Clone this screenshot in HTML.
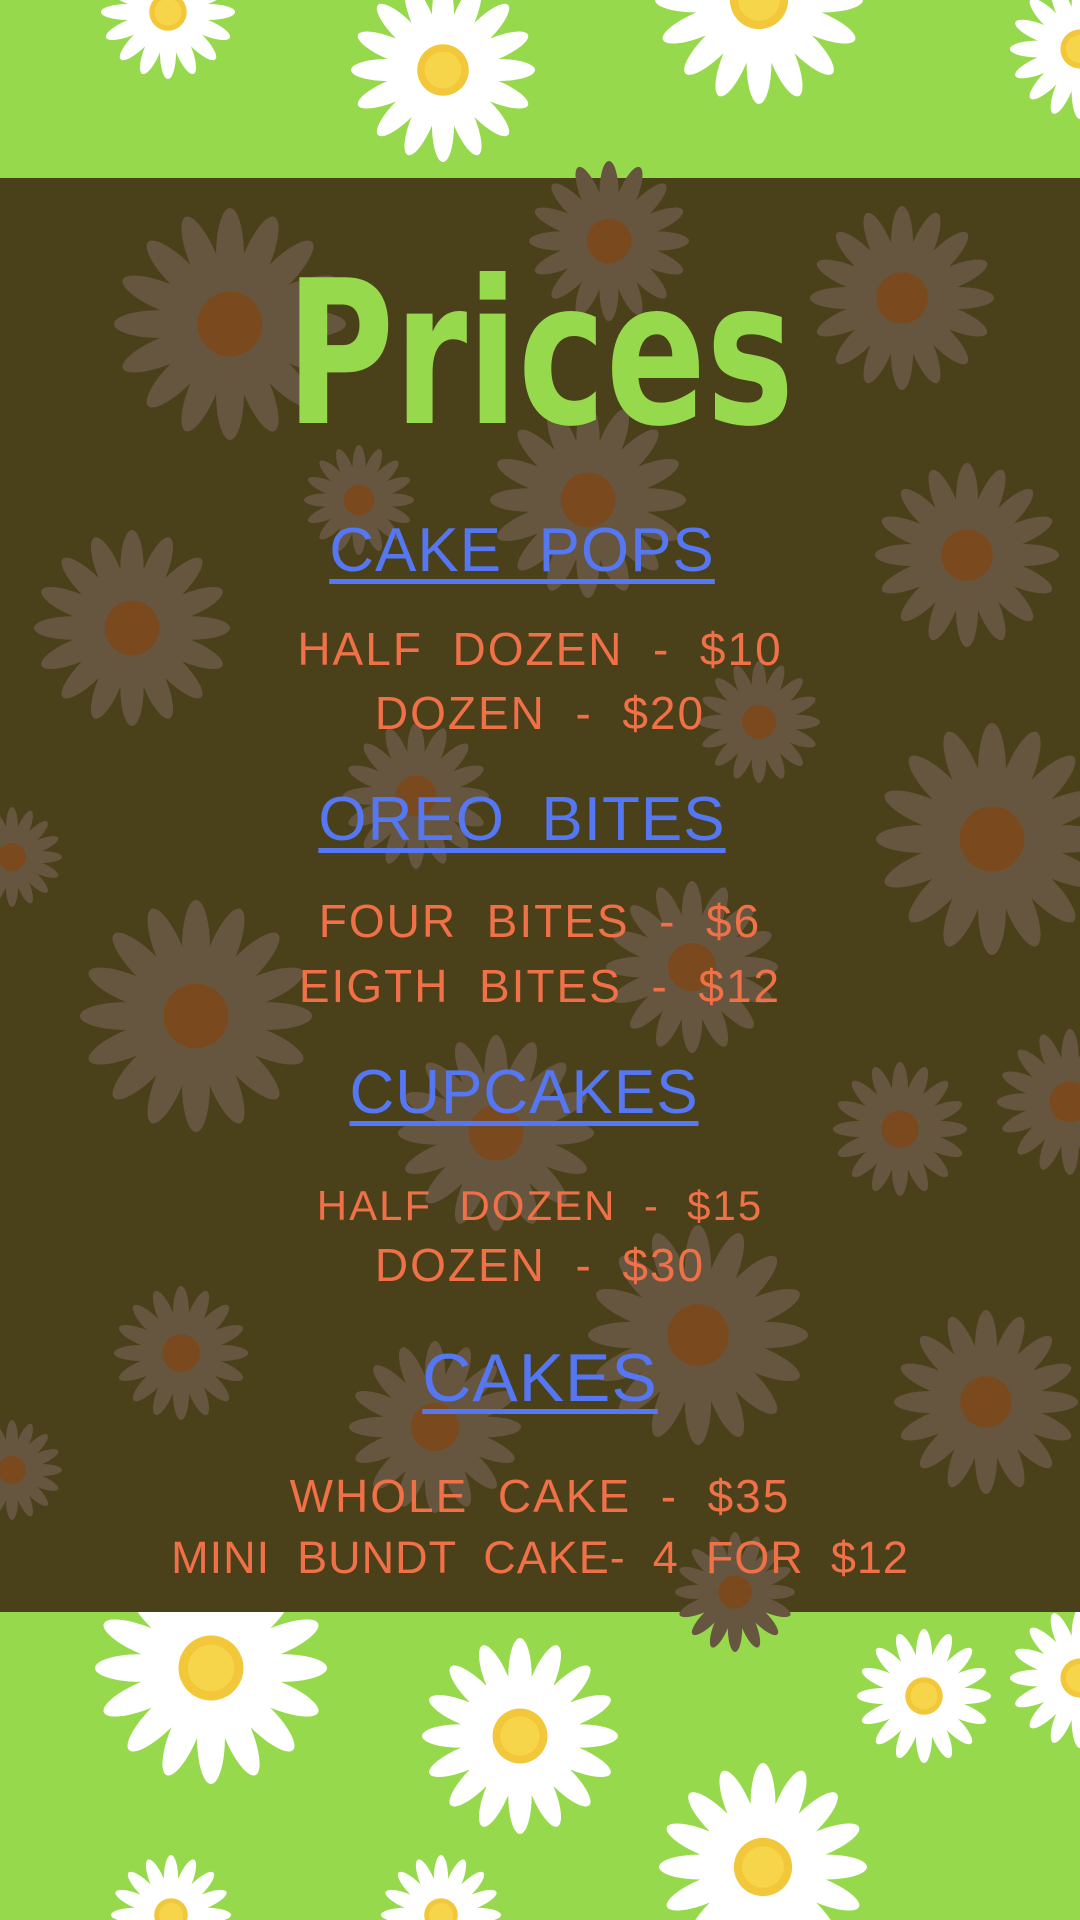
<!DOCTYPE html>
<html><head><meta charset="utf-8"><style>
html,body{margin:0;padding:0}
body{width:1080px;height:1920px;position:relative;overflow:hidden;background:#97d94c;font-family:"Liberation Sans",sans-serif}
svg{position:absolute;left:0;top:0}
.t{position:absolute;left:0;width:1080px;text-align:center;line-height:1;white-space:pre}
.h{color:#5577f2;font-size:62px;text-decoration:underline;text-decoration-thickness:5px;text-underline-offset:8px;letter-spacing:1px}
.i{color:#f07048;font-size:46px;letter-spacing:2px}
</style></head><body>
<svg width="1080" height="1920" viewBox="0 0 1080 1920">
<defs>
<g id="pw"><ellipse cx="0" cy="-0.6" rx="0.12" ry="0.4"/></g>
<g id="pet">
<use href="#pw"/><use href="#pw" transform="rotate(22.5)"/><use href="#pw" transform="rotate(45)"/><use href="#pw" transform="rotate(67.5)"/>
<use href="#pw" transform="rotate(90)"/><use href="#pw" transform="rotate(112.5)"/><use href="#pw" transform="rotate(135)"/><use href="#pw" transform="rotate(157.5)"/>
<use href="#pw" transform="rotate(180)"/><use href="#pw" transform="rotate(202.5)"/><use href="#pw" transform="rotate(225)"/><use href="#pw" transform="rotate(247.5)"/>
<use href="#pw" transform="rotate(270)"/><use href="#pw" transform="rotate(292.5)"/><use href="#pw" transform="rotate(315)"/><use href="#pw" transform="rotate(337.5)"/>
</g>
<g id="wd"><g fill="#ffffff"><use href="#pet"/></g><circle r="0.28" fill="#f2c83a"/><circle r="0.2" fill="#f6d54a"/></g>
<g id="dd"><g fill="#67563f"><use href="#pet"/></g><circle r="0.28" fill="#7a4a1e"/></g>
</defs>
<g>
<use href="#wd" transform="translate(168,12) scale(67)"/>
<use href="#wd" transform="translate(443,70) scale(92)"/>
<use href="#wd" transform="translate(759,0) scale(104)"/>
<use href="#wd" transform="translate(1080,49) scale(70)"/>
<use href="#wd" transform="translate(211,1668) scale(116)"/>
<use href="#wd" transform="translate(520,1736) scale(98)"/>
<use href="#wd" transform="translate(924,1696) scale(67)"/>
<use href="#wd" transform="translate(763,1867) scale(104)"/>
<use href="#wd" transform="translate(171,1915) scale(60)"/>
<use href="#wd" transform="translate(441,1915) scale(60)"/>
<use href="#wd" transform="translate(1080,1678) scale(70)"/>
</g>
<rect x="0" y="178" width="1080" height="1434" fill="#4a401a"/>
<g>
<use href="#dd" transform="translate(230,324) scale(116)"/>
<use href="#dd" transform="translate(609,241) scale(80)"/>
<use href="#dd" transform="translate(902,298) scale(92)"/>
<use href="#dd" transform="translate(588,500) scale(98)"/>
<use href="#dd" transform="translate(359,500) scale(55)"/>
<use href="#dd" transform="translate(967,555) scale(92)"/>
<use href="#dd" transform="translate(132,628) scale(98)"/>
<use href="#dd" transform="translate(759,722) scale(61)"/>
<use href="#dd" transform="translate(992,839) scale(116)"/>
<use href="#dd" transform="translate(196,1016) scale(116)"/>
<use href="#dd" transform="translate(416,796) scale(73)"/>
<use href="#dd" transform="translate(692,967) scale(86)"/>
<use href="#dd" transform="translate(900,1129) scale(67)"/>
<use href="#dd" transform="translate(496,1133) scale(98)"/>
<use href="#dd" transform="translate(1070,1102) scale(73)"/>
<use href="#dd" transform="translate(698,1335) scale(110)"/>
<use href="#dd" transform="translate(181,1353) scale(67)"/>
<use href="#dd" transform="translate(986,1402) scale(92)"/>
<use href="#dd" transform="translate(435,1427) scale(86)"/>
<use href="#dd" transform="translate(12,857) scale(50)"/>
<use href="#dd" transform="translate(12,1470) scale(50)"/>
<use href="#dd" transform="translate(735,1592) scale(60)"/>
</g>
</svg>
<div class="t" style="top:255px;font-family:'DejaVu Sans',sans-serif;font-weight:bold;font-size:200px;color:#97d94c;transform:scaleX(0.74)">Prices</div>
<div class="t h" style="top:520px;left:-18px">CAKE  POPS</div>
<div class="t i" style="top:626px">HALF  DOZEN  -  $10</div>
<div class="t i" style="top:690px">DOZEN  -  $20</div>
<div class="t h" style="top:789px;left:-18px">OREO  BITES</div>
<div class="t i" style="top:898px">FOUR  BITES  -  $6</div>
<div class="t i" style="top:963px">EIGTH  BITES  -  $12</div>
<div class="t h" style="top:1062px;left:-16px">CUPCAKES</div>
<div class="t i" style="top:1185px;font-size:42px">HALF  DOZEN  -  $15</div>
<div class="t i" style="top:1242px">DOZEN  -  $30</div>
<div class="t h" style="top:1344px;font-size:68px">CAKES</div>
<div class="t i" style="top:1473px">WHOLE  CAKE  -  $35</div>
<div class="t i" style="top:1535px;font-size:45px;letter-spacing:1px">MINI  BUNDT  CAKE-  4  FOR  $12</div>
</body></html>
